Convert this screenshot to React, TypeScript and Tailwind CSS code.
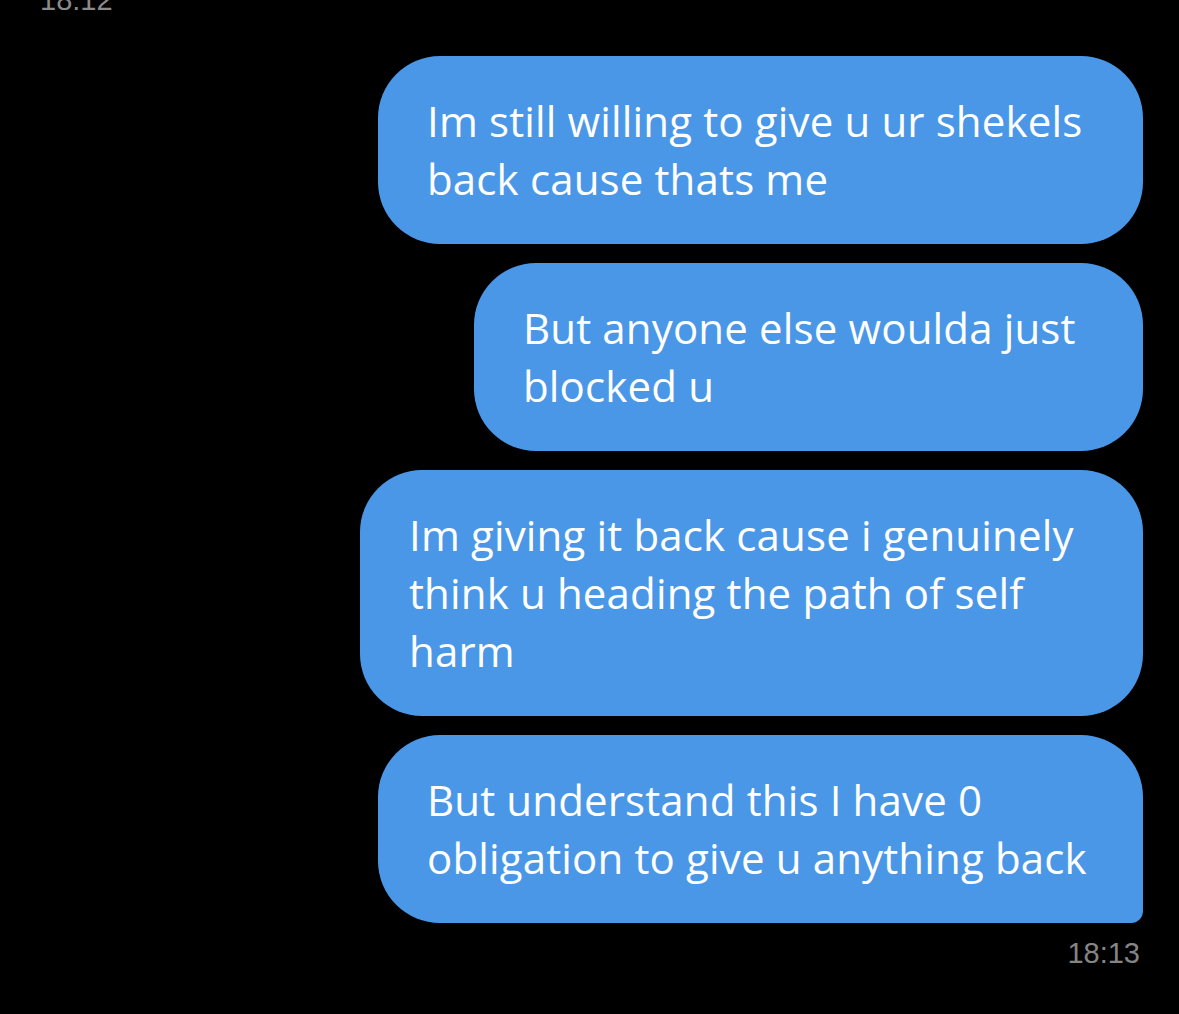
const messages: { lines: string[]; width: string; last?: boolean }[] = [
  { lines: ["Im still willing to give u ur shekels", "back cause thats me"], width: "w-[765px]" },
  { lines: ["But anyone else woulda just", "blocked u"], width: "w-[669px]" },
  {
    lines: ["Im giving it back cause i genuinely", "think u heading the path of self", "harm"],
    width: "w-[783px]",
  },
  {
    lines: ["But understand this I have 0", "obligation to give u anything back"],
    width: "w-[765px]",
    last: true,
  },
];

const Bubble = ({ lines, width, last }: { lines: string[]; width: string; last?: boolean }) => {
  return (
    <div
      className={`${width} bg-[#4a97e7] text-white pl-[49px] pr-[20px] py-[36px] rounded-[62px] ${
        last ? "rounded-br-[12px]" : ""
      }`}
    >
      <p className="text-[42px] leading-[58px] whitespace-nowrap font-['Open_Sans',sans-serif] tracking-[0.15px]">
        {lines.map((line, i) => (
          <span key={i} className="block">
            {line}
          </span>
        ))}
      </p>
    </div>
  );
};

const App = () => {
  return (
    <div className="bg-black w-full h-[1014px] overflow-hidden flex flex-col">
      <div className="-mt-[16px] ml-[40px] text-[29px] leading-[32px] text-[#8a8a8a] font-['Liberation_Sans',sans-serif]">
        18:12
      </div>
      <div className="flex flex-col items-end gap-[19px] pr-[36px] mt-[40px]">
        {messages.map((m, i) => (
          <Bubble key={i} lines={m.lines} width={m.width} last={m.last} />
        ))}
      </div>
      <div className="self-end pr-[39px] mt-[13px] text-[29px] leading-[34px] text-[#858585] font-['Liberation_Sans',sans-serif]">
        18:13
      </div>
    </div>
  );
};

export default App;
